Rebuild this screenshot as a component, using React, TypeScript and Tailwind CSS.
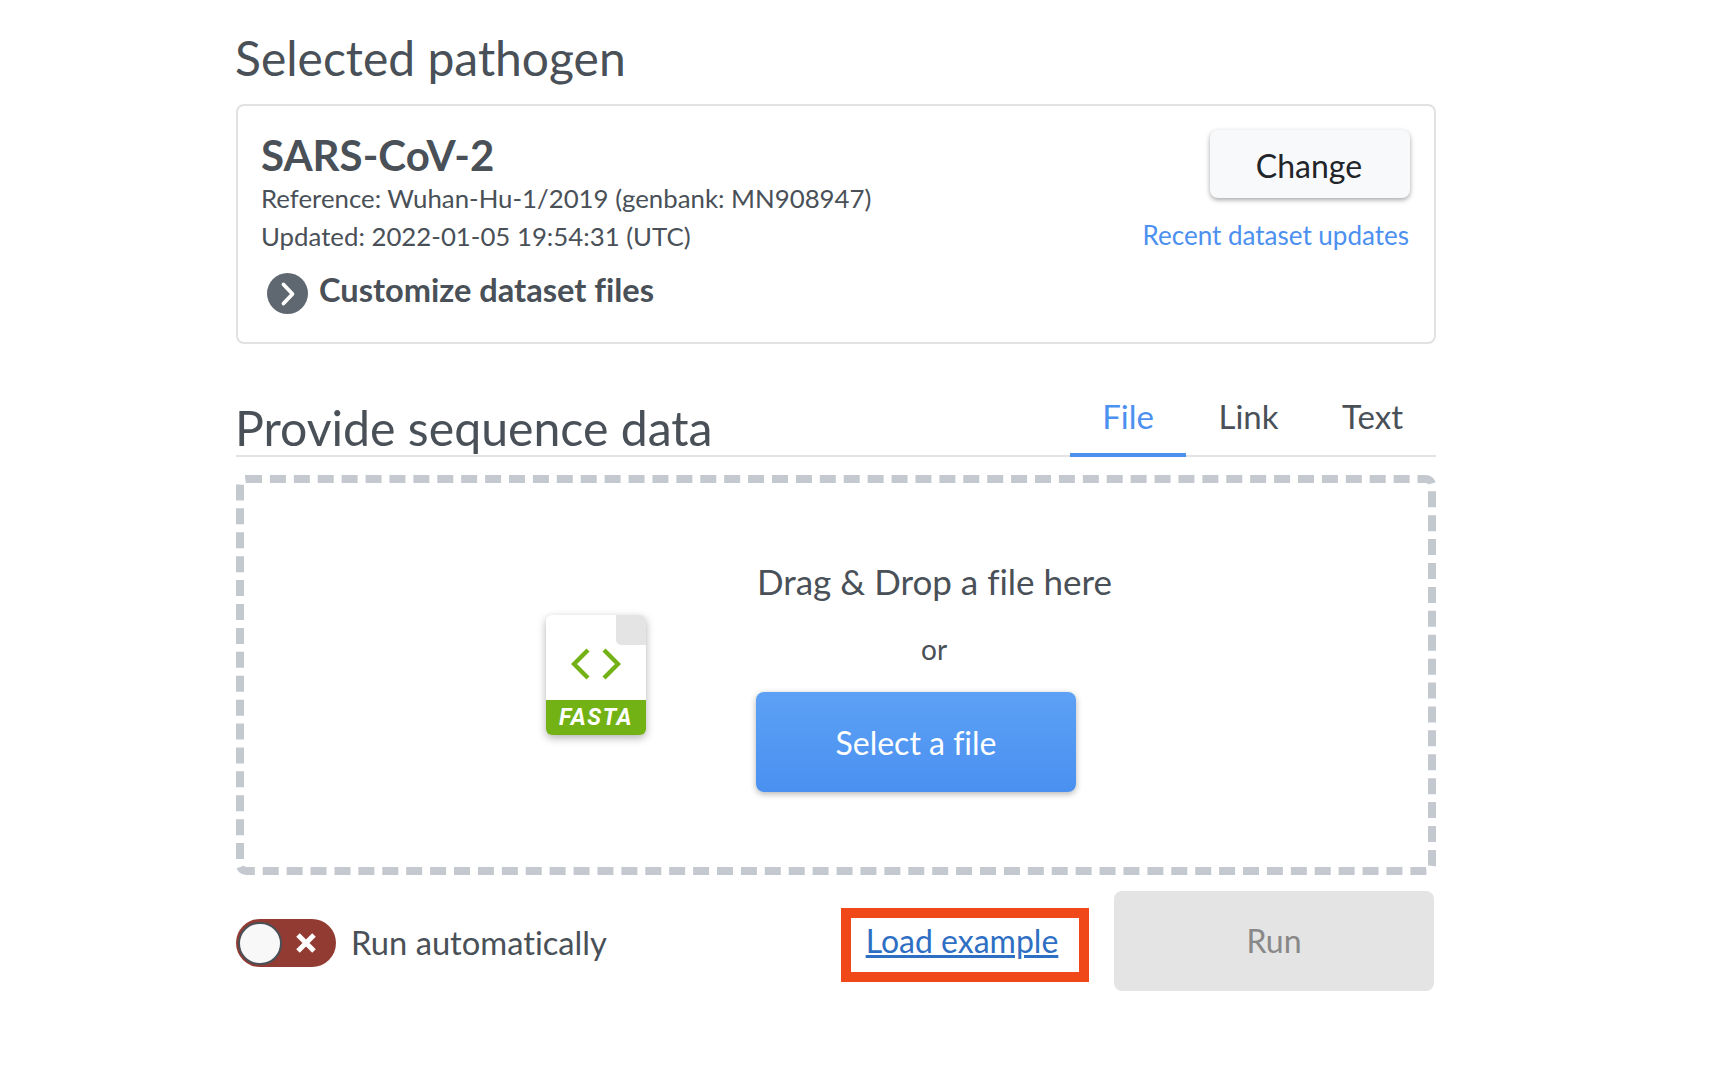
export default function App() {
  return (
    <div className="min-h-[1068px] bg-white font-['Lato','Carlito','Liberation_Sans',sans-serif] text-[#495057] [font-variant-ligatures:none]">
      <div className="ml-[236px] w-[1200px]">
        <h1 className="pt-[28px] text-[48px] leading-[59px] font-normal -ml-[1px]">Selected pathogen</h1>
        <section className="mt-[17px] flex h-[240px] justify-between rounded-[8px] border-2 border-[#e2e2e2] pl-[23px] pr-[24px]">
          <div className="pt-[25px]">
            <h2 className="text-[42px] leading-[48px] font-bold">SARS-CoV-2</h2>
            <p className="text-[25.8px] leading-[38px]">Reference: Wuhan-Hu-1/2019 (genbank: MN908947)</p>
            <p className="text-[25.8px] leading-[38px]">Updated: 2022-01-05 19:54:31 (UTC)</p>
            <div className="mt-[15px] ml-[6px] flex items-start gap-[11px]">
              <span className="mt-[3px] flex h-[41px] w-[41px] items-center justify-center rounded-full bg-[#5f6770]">
                <svg width="16" height="26" viewBox="0 0 16 26" fill="none" stroke="#fff" strokeWidth="3.8" strokeLinecap="round" strokeLinejoin="round"><path d="M3.5 3.5l9 9.5-9 9.5" /></svg>
              </span>
              <span className="text-[32.6px] leading-[40px] font-bold">Customize dataset files</span>
            </div>
          </div>
          <div className="flex flex-col items-end pt-[24px]">
            <button className="h-[68px] w-[200px] rounded-[8px] bg-[#f8f9fa] pt-[4px] pr-[2px] text-[32px] text-[#212529] shadow-[0_2px_5px_rgba(0,0,0,0.35)]">Change</button>
            <a className="mt-[21px] mr-[1px] text-[26px] leading-[32px] text-[#4c90f0]">Recent dataset updates</a>
          </div>
        </section>
        <div className="mt-[50px] flex items-end justify-between border-b-2 border-[#e2e2e2]">
          <h1 className="text-[48.2px] leading-[56px] font-normal -ml-[1px]">Provide sequence data</h1>
          <nav className="flex pt-[2px] text-[33px] leading-[40px]">
            <span className="-mb-[2px] w-[116px] border-b-4 border-[#4c90f0] pb-[17px] text-center text-[#4c90f0]">File</span>
            <span className="w-[125px] text-center">Link</span>
            <span className="w-[125px] pr-[2px] text-center">Text</span>
          </nav>
        </div>
        <div className="mt-[18px] flex h-[400px] rounded-[10px] border-[8px] border-dashed border-[#c4c8cf]">
          <div className="ml-[302px] mt-[132px] h-[120px] w-[100px] shrink-0">
            <div className="relative flex h-[120px] w-[100px] flex-col overflow-hidden rounded-[6px] bg-white shadow-[0_3px_8px_rgba(0,0,0,0.3)]">
              <span className="absolute right-0 top-0 h-[30px] w-[30px] rounded-bl-[5px] bg-[#e4e4e4]" />
              <div className="flex h-[85px] items-center justify-center pt-[13px]">
                <svg width="50" height="32" viewBox="0 0 50 32" fill="none" stroke="#73b214" strokeWidth="4.4"><path d="M17 2L3 16l14 14M33 2l14 14-14 14" /></svg>
              </div>
              <div className="flex h-[35px] items-center justify-center bg-[#73b214] pt-[2px] text-[23px] font-bold italic tracking-[1.5px] text-white font-['Roboto',sans-serif]">FASTA</div>
            </div>
          </div>
          <div className="ml-[110px] flex flex-col">
            <p className="mt-[76px] ml-[1px] text-[35px] leading-[44px]">Drag &amp; Drop a file here</p>
            <p className="mt-[28px] ml-[165px] text-[28px] leading-[36px]">or</p>
            <button className="mt-[25px] h-[100px] w-[320px] rounded-[8px] bg-gradient-to-b from-[#5ca1f5] to-[#4a90f0] pt-[2px] text-[32px] text-white shadow-[0_2px_6px_rgba(0,0,0,0.3)]">Select a file</button>
          </div>
        </div>
        <div className="mt-[16px] flex items-start justify-between pr-[2px]">
          <div className="mt-[28px] flex items-center gap-[15px]">
            <span className="relative h-[48px] w-[100px] rounded-full bg-[#923b33]">
              <span className="absolute left-[2px] top-[3px] h-[43px] w-[44px] rounded-full border-2 border-[#495057] bg-[#f8f8f8]" />
              <svg className="absolute left-[60px] top-[14px]" width="20" height="20" viewBox="0 0 20 20" stroke="#fff" strokeWidth="5"><path d="M2 2l16 16M18 2L2 18" /></svg>
            </span>
            <span className="text-[32.7px] leading-[40px]">Run automatically</span>
          </div>
          <div className="flex items-start gap-[25px]">
            <div className="mt-[17px] flex h-[74px] w-[248px] items-center justify-center border-[10px] border-[#f04819] pb-[8px] pr-[6px]">
              <a className="text-[32px] leading-[40px] text-[#2e6fc4] underline">Load example</a>
            </div>
            <button className="h-[100px] w-[320px] rounded-[8px] bg-[#e4e4e4] text-[32px] text-[#888888]">Run</button>
          </div>
        </div>
      </div>
    </div>
  );
}
